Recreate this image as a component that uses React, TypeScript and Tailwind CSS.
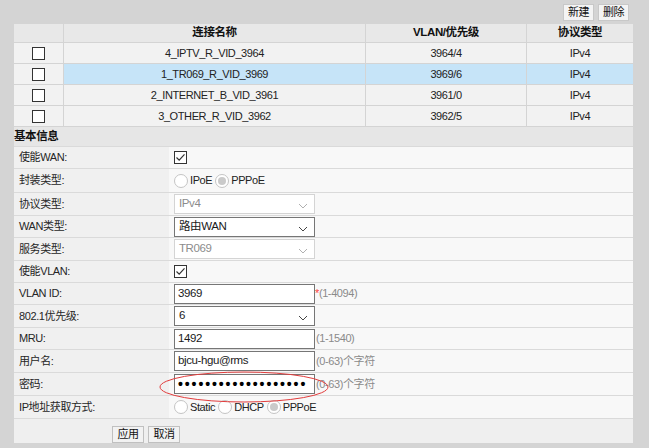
import React from "react";

const font = "font-['Liberation_Sans','Noto_Sans_CJK_SC',sans-serif]";

function Box({ checked = false }: { checked?: boolean }) {
  return (
    <span className="inline-flex h-[13px] w-[13px] items-center justify-center border border-[#333] bg-white">
      {checked && (
        <svg width="11" height="11" viewBox="0 0 11 11">
          <path d="M1.5 5.5 L4.2 8.2 L9.5 2.3" fill="none" stroke="#333" strokeWidth="1.2" />
        </svg>
      )}
    </span>
  );
}

function Radio({ on = false, label }: { on?: boolean; label: string }) {
  return (
    <span className="inline-flex items-center">
      <span className="relative inline-flex h-[14px] w-[14px] items-center justify-center rounded-full border border-[#c4c4c4] bg-white">
        {on && <span className="h-[8px] w-[8px] rounded-full bg-[#cacaca]" />}
      </span>
      <span className="ml-[2px] text-[#222]">{label}</span>
    </span>
  );
}

function Chevron({ color }: { color: string }) {
  return (
    <svg width="10" height="6" viewBox="0 0 10 6" className="absolute right-[6px] top-[8px]">
      <path d="M1 1 L5 5 L9 1" fill="none" stroke={color} strokeWidth="1" />
    </svg>
  );
}

function Select({ value, disabled = false }: { value: string; disabled?: boolean }) {
  return (
    <div
      className={
        "relative flex h-[20px] w-[141px] items-center bg-white pl-[4px] text-[11.5px] " +
        (disabled ? "border border-[#d4d4d4] text-[#8c8c8c]" : "border border-[#767676] text-[#1a1a1a]")
      }
    >
      {value}
      <Chevron color={disabled ? "#b0b0b0" : "#444"} />
    </div>
  );
}

function Input({ value }: { value: string }) {
  return (
    <div className="flex h-[20px] w-[141px] items-center border border-[#767676] bg-white pl-[3px] text-[11.5px] text-[#1a1a1a]">
      {value}
    </div>
  );
}

function Row({ label, h, children }: { label: string; h: string; children: React.ReactNode }) {
  return (
    <div className={"flex border-b border-[#dadada] " + h}>
      <div className="flex w-[155px] shrink-0 items-center bg-[#f0f0f0] pl-[5px] text-[#262626]">{label}</div>
      <div className="flex flex-1 items-center bg-[#f8f8f8] pl-[5px]">{children}</div>
    </div>
  );
}

const rows = [
  { n: "4_IPTV_R_VID_3964", v: "3964/4", sel: false },
  { n: "1_TR069_R_VID_3969", v: "3969/6", sel: true },
  { n: "2_INTERNET_B_VID_3961", v: "3961/0", sel: false },
  { n: "3_OTHER_R_VID_3962", v: "3962/5", sel: false },
];

export default function App() {
  return (
    <div className={"relative h-[448px] w-[649px] overflow-hidden bg-[#d4d4d4] text-[11px] tracking-[-0.4px] " + font}>
      <div className="ml-[14px] w-[619px]">
        {/* top buttons */}
        <div className="flex h-[24px] justify-end gap-[4px] pr-[4px] pt-[4px]">
          <button className="h-[17px] w-[31px] border border-[#c8c8c8] bg-[#f4f4f4] leading-[15px] text-[#111]">新建</button>
          <button className="h-[17px] w-[31px] border border-[#c8c8c8] bg-[#f4f4f4] leading-[15px] text-[#111]">删除</button>
        </div>
        {/* table */}
        <div className="grid grid-cols-[50px_302px_161px_106px] text-center text-[#222]">
          <div className="h-[19px] border-b border-r border-[#d4d4d4] bg-[#e8e8e8]" />
          <div className="flex h-[19px] items-center justify-center border-b border-r border-[#d4d4d4] bg-[#e8e8e8] text-[11.5px] font-bold text-[#111]">连接名称</div>
          <div className="flex h-[19px] items-center justify-center border-b border-r border-[#d4d4d4] bg-[#e8e8e8] text-[11.5px] font-bold text-[#111]">VLAN/优先级</div>
          <div className="flex h-[19px] items-center justify-center border-b border-[#d4d4d4] bg-[#e8e8e8] text-[11.5px] font-bold text-[#111]">协议类型</div>
          {rows.map((r) => {
            const bg = r.sel ? "bg-[#c6e4f8]" : "bg-[#f2f2f2]";
            return (
              <React.Fragment key={r.n}>
                <div className="flex h-[21px] items-center justify-center border-b border-r border-[#d4d4d4] bg-[#f2f2f2]">
                  <Box />
                </div>
                <div className={"flex h-[21px] items-center justify-center border-b border-r border-[#d4d4d4] " + bg}>{r.n}</div>
                <div className={"flex h-[21px] items-center justify-center border-b border-r border-[#d4d4d4] " + bg}>{r.v}</div>
                <div className={"flex h-[21px] items-center justify-center border-b border-[#d4d4d4] " + bg}>IPv4</div>
              </React.Fragment>
            );
          })}
        </div>
        {/* form */}
        <div className="flex h-[20px] items-center border-b border-[#dadada] bg-[#e6e6e6] text-[11.5px] font-bold text-[#111]">基本信息</div>
        <Row label="使能WAN:" h="h-[22px]"><Box checked /></Row>
        <Row label="封装类型:" h="h-[24px]">
          <span className="flex gap-[3px]">
            <Radio label="IPoE" />
            <Radio on label="PPPoE" />
          </span>
        </Row>
        <Row label="协议类型:" h="h-[23px]"><Select value="IPv4" disabled /></Row>
        <Row label="WAN类型:" h="h-[22px]"><Select value="路由WAN" /></Row>
        <Row label="服务类型:" h="h-[23px]"><Select value="TR069" disabled /></Row>
        <Row label="使能VLAN:" h="h-[22px]"><Box checked /></Row>
        <Row label="VLAN ID:" h="h-[22px]">
          <Input value="3969" />
          <span className="text-[#ff4040]">*</span>
          <span className="text-[#8a8a8a]">(1-4094)</span>
        </Row>
        <Row label="802.1优先级:" h="h-[23px]"><Select value="6" /></Row>
        <Row label="MRU:" h="h-[22px]">
          <Input value="1492" />
          <span className="ml-[1px] text-[#8a8a8a]">(1-1540)</span>
        </Row>
        <Row label="用户名:" h="h-[23px]">
          <Input value="bjcu-hgu@rms" />
          <span className="ml-[1px] text-[#8a8a8a]">(0-63)个字符</span>
        </Row>
        <Row label="密码:" h="h-[23px]">
          <div className="flex h-[20px] w-[141px] items-center overflow-hidden border border-[#767676] bg-white pl-[3px] text-[14px] font-bold tracking-[1.9px] text-black">
            •••••••••••••••••••
          </div>
          <span className="ml-[1px] text-[#8a8a8a]">(0-63)个字符</span>
        </Row>
        <Row label="IP地址获取方式:" h="h-[23px]">
          <span className="flex gap-[3px]">
            <Radio label="Static" />
            <Radio label="DHCP" />
            <Radio on label="PPPoE" />
          </span>
        </Row>
        <div className="flex h-[24px] gap-[4px] bg-[#efefef] pl-[98px] pt-[7px]">
          <button className="h-[17px] w-[32px] border border-[#c0c0c0] bg-[#f2f2f2] leading-[15px] text-[#111]">应用</button>
          <button className="h-[17px] w-[32px] border border-[#c0c0c0] bg-[#f2f2f2] leading-[15px] text-[#111]">取消</button>
        </div>
      </div>
      {/* red annotation ellipse */}
      <svg className="pointer-events-none absolute left-[158px] top-[370px]" width="172" height="34" viewBox="0 0 172 34">
        <ellipse cx="86" cy="17" rx="84" ry="15" fill="none" stroke="#e23c3c" strokeWidth="1" />
      </svg>
    </div>
  );
}
